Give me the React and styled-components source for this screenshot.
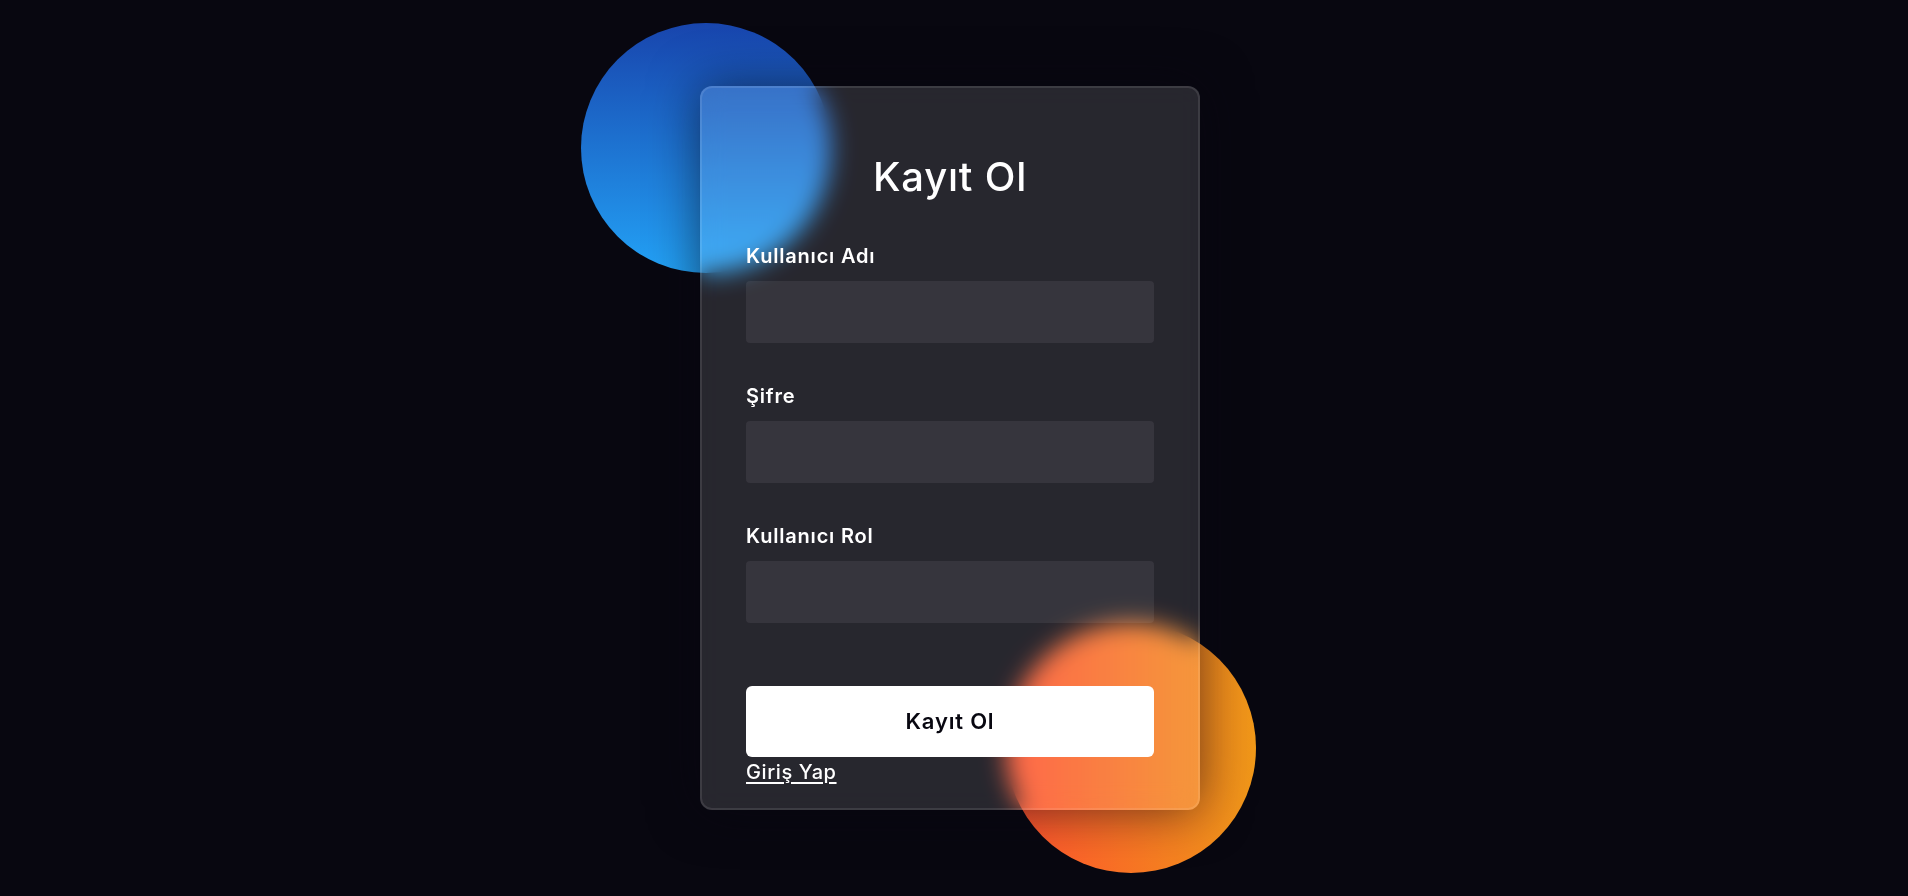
import React from 'react'
import styled, { createGlobalStyle } from 'styled-components'

const GlobalStyle = createGlobalStyle`
  * {
    margin: 0;
    padding: 0;
    box-sizing: border-box;
  }
  body {
    background-color: #080710;
    font-family: Inter, "Open Sans", sans-serif;
  }
`

const Page = styled.main`
  width: 100%;
  height: 100vh;
  display: flex;
  justify-content: center;
  align-items: center;
  overflow: hidden;
`

const Stage = styled.div`
  position: relative;
  width: 538px;
  height: 650px;
  margin-right: 8px;
  display: flex;
  justify-content: center;
  align-items: center;
`

const Shape = styled.div`
  position: absolute;
  width: 250px;
  height: 250px;
  border-radius: 50%;
  ${({ $variant }) =>
    $variant === 'blue'
      ? `
    background: linear-gradient(#1845ad, #23a2f6);
    left: -100px;
    top: -100px;
  `
      : `
    background: linear-gradient(to right, #ff512f, #f09819);
    right: -37px;
    bottom: -100px;
  `}
`

const Form = styled.form`
  position: relative;
  width: 500px;
  height: 724px;
  flex-shrink: 0;
  background-color: rgba(255, 255, 255, 0.13);
  border-radius: 12px;
  backdrop-filter: blur(12px);
  border: 2px solid rgba(255, 255, 255, 0.1);
  box-shadow: 0 0 50px rgba(8, 7, 16, 0.6);
  padding: 63px 44px;
  color: #fff;
  letter-spacing: 0.6px;
`

const Title = styled.h3`
  font-size: 40px;
  font-weight: 500;
  line-height: 52px;
  text-align: center;
  letter-spacing: 0.8px;
`

const Label = styled.label`
  display: block;
  margin-top: 38px;
  font-size: 20px;
  font-weight: 600;
  line-height: 30px;
  letter-spacing: 0.8px;
`

const Input = styled.input`
  display: block;
  width: 100%;
  height: 62px;
  margin-top: 10px;
  padding: 0 12px;
  border: none;
  border-radius: 4px;
  background-color: rgba(255, 255, 255, 0.07);
  color: #fff;
  font-family: inherit;
  font-size: 18px;
  font-weight: 300;
  outline: none;
`

const Submit = styled.button`
  display: block;
  width: 100%;
  margin-top: 63px;
  padding: 19px 0;
  border: none;
  border-radius: 6px;
  background-color: #fff;
  color: #080710;
  font-family: inherit;
  font-size: 22px;
  font-weight: 600;
  line-height: 33px;
  letter-spacing: 0.8px;
  cursor: pointer;
`

const LinkText = styled.a`
  display: inline-block;
  font-size: 20px;
  font-weight: 500;
  line-height: 30px;
  color: #fff;
  text-decoration: underline;
  text-underline-offset: 3px;
  cursor: pointer;
`

export default function App() {
  return (
    <>
      <GlobalStyle />
      <Page>
        <Stage>
          <Shape $variant="blue" />
          <Shape $variant="orange" />
          <Form onSubmit={(e) => e.preventDefault()}>
            <Title>Kayıt Ol</Title>

            <Label htmlFor="username">Kullanıcı Adı</Label>
            <Input type="text" id="username" />

            <Label htmlFor="password">Şifre</Label>
            <Input type="password" id="password" />

            <Label htmlFor="role">Kullanıcı Rol</Label>
            <Input type="text" id="role" />

            <Submit type="submit">Kayıt Ol</Submit>
            <LinkText>Giriş Yap</LinkText>
          </Form>
        </Stage>
      </Page>
    </>
  )
}
